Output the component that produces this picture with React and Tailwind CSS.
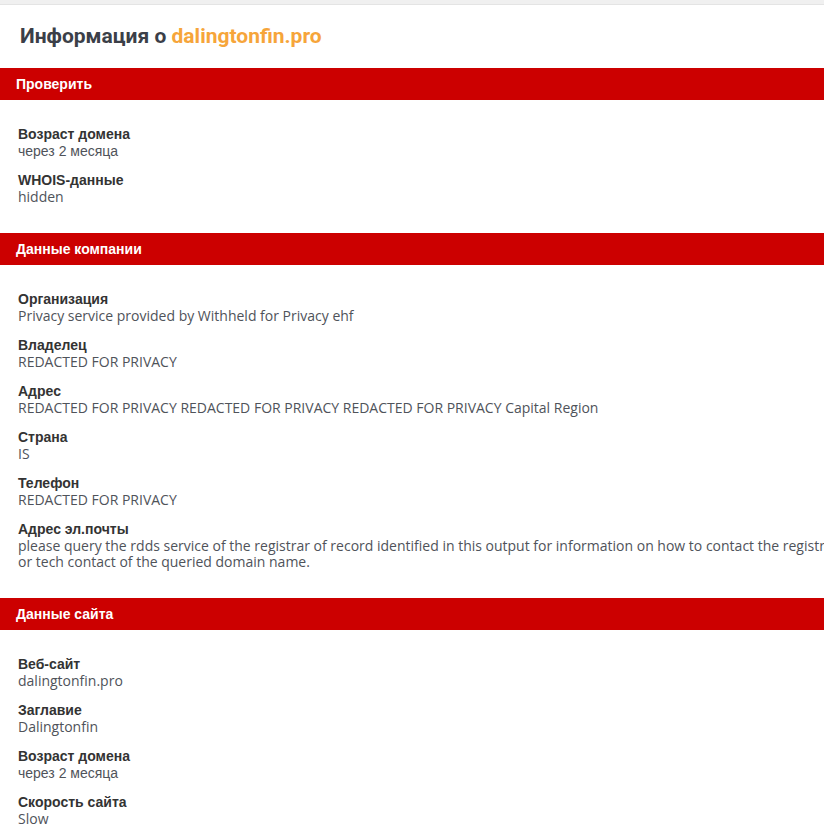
import React from 'react';

const cyr = "font-['Liberation_Sans',Arial,sans-serif]";
const lat = "font-['Open_Sans',Arial,sans-serif]";

const sections = [
  {
    title: 'Проверить',
    items: [
      { label: 'Возраст домена', value: 'через 2 месяца', cyrValue: true },
      { label: 'WHOIS-данные', value: 'hidden' },
    ],
  },
  {
    title: 'Данные компании',
    items: [
      { label: 'Организация', value: 'Privacy service provided by Withheld for Privacy ehf' },
      { label: 'Владелец', value: 'REDACTED FOR PRIVACY' },
      { label: 'Адрес', value: 'REDACTED FOR PRIVACY REDACTED FOR PRIVACY REDACTED FOR PRIVACY Capital Region' },
      { label: 'Страна', value: 'IS' },
      { label: 'Телефон', value: 'REDACTED FOR PRIVACY' },
      {
        label: 'Адрес эл.почты',
        value:
          'please query the rdds service of the registrar of record identified in this output for information on how to contact the registrant, admin, or tech contact of the queried domain name.',
      },
    ],
  },
  {
    title: 'Данные сайта',
    items: [
      { label: 'Веб-сайт', value: 'dalingtonfin.pro' },
      { label: 'Заглавие', value: 'Dalingtonfin' },
      { label: 'Возраст домена', value: 'через 2 месяца', cyrValue: true },
      { label: 'Скорость сайта', value: 'Slow' },
    ],
  },
];

function Section({ title, items }) {
  return (
    <div>
      <div className={`h-8 bg-[#cc0000] px-4 flex items-center text-white text-sm font-bold ${cyr}`}>{title}</div>
      <div className="pt-[26px] pb-[15px] px-[18px]">
        {items.map((it, i) => (
          <div key={i} className="mb-[13px]">
            <div className={`text-sm font-bold leading-[17px] text-[#333] ${cyr}`}>{it.label}</div>
            <div className={`text-sm leading-4 text-[#4f535a] ${it.cyrValue ? cyr : lat}`}>{it.value}</div>
          </div>
        ))}
      </div>
    </div>
  );
}

export default function App() {
  return (
    <div className="w-screen h-[830px] overflow-hidden bg-white">
      <div className="w-[930px]">
        <div className="h-[5px] bg-[#f0f0f0] border-b border-[#e4e4e4]" />
        <div className="h-[63px] px-5 flex items-center">
          <h1 className="text-[21px] font-bold text-[#3b3f48] font-['Roboto',Arial,sans-serif]">
            Информация о <span className="text-[#f6a53a]">dalingtonfin.pro</span>
          </h1>
        </div>
        {sections.map((s, i) => (
          <Section key={i} {...s} />
        ))}
      </div>
    </div>
  );
}
